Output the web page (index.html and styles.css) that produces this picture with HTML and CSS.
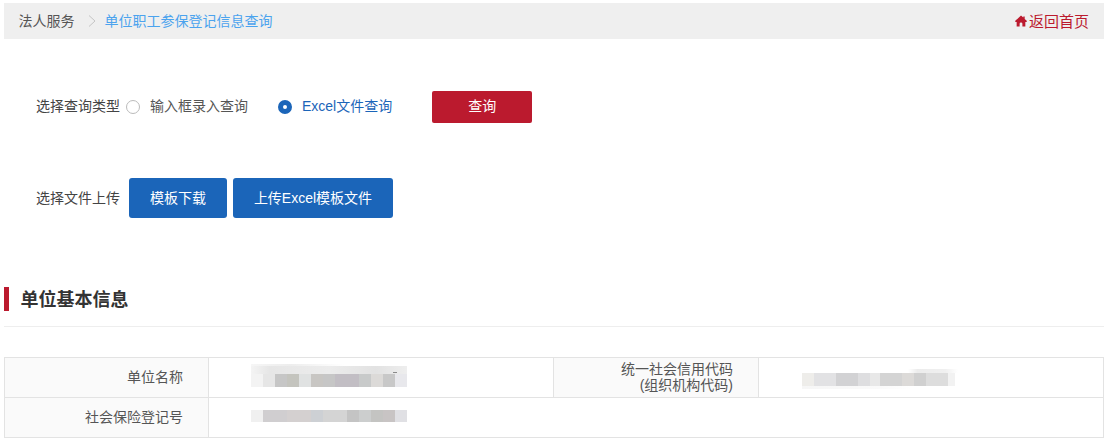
FILE: index.html
```html
<!DOCTYPE html>
<html lang="zh-CN">
<head>
  <meta charset="UTF-8">
  <meta name="viewport" content="width=device-width, initial-scale=1.0">
  <title>单位职工参保登记信息查询</title>
  <link rel="stylesheet" href="styles.css">
</head>
<body>
  <div class="crumb-bar">
    <div class="crumbs">
      <span class="crumb">法人服务</span>
      <svg class="crumb-arrow" width="8" height="12" viewBox="0 0 8 12"><path d="M1 0.500l6 5.500-6 5.500" fill="none" stroke="#c4c4c4" stroke-width="1"/></svg>
      <span class="crumb-current">单位职工参保登记信息查询</span>
    </div>
    <a class="home-link" href="#">
      <svg class="home-icon" width="12" height="12" viewBox="0 0 13 12"><path d="M6.500 0L0.300 5.800v1.200h1.500v5h3.200V9a1.500 1.500 0 0 1 3 0v3h3.200V7h1.500V5.800L10.500 3.700V1H9v1.300z" fill="#bb1a2e"/></svg>返回首页
    </a>
  </div>

  <div class="query-row">
    <span class="field-label">选择查询类型</span>
    <label class="radio radio-first"><span class="radio-dot"></span><span class="radio-text">输入框录入查询</span></label>
    <label class="radio radio-on"><span class="radio-dot"></span><span class="radio-text">Excel文件查询</span></label>
    <button class="btn-red">查询</button>
  </div>

  <div class="upload-row">
    <span class="field-label">选择文件上传</span>
    <button class="btn-blue btn-template">模板下载</button>
    <button class="btn-blue btn-upload">上传Excel模板文件</button>
  </div>

  <div class="section-head">
    <h2 class="section-title">单位基本信息</h2>
  </div>

  <table class="info-table">
    <colgroup>
      <col class="col-a"><col class="col-b"><col class="col-c"><col>
    </colgroup>
    <tr>
      <th>单位名称</th>
      <td><div class="blur blur-name"></div></td>
      <th class="two-line">统一社会信用代码<br>(组织机构代码)</th>
      <td><div class="blur blur-code"></div></td>
    </tr>
    <tr>
      <th>社会保险登记号</th>
      <td colspan="3"><div class="blur blur-reg"></div></td>
    </tr>
  </table>
</body>
</html>
```

FILE: styles.css
```css
body {
    font-family: "Liberation Sans", "Noto Sans CJK SC", sans-serif;
    font-size: 14px;
    color: #444;
    background-color: #fff;
    margin: 0;
    padding: 3px 0 0 4px;
}

.crumb-bar {
    display: flex;
    justify-content: space-between;
    align-items: center;
    height: 36px;
    padding: 0 15px 0 14.500px;
    background-color: #efefef;
}

.crumbs {
    display: flex;
    align-items: center;
}

.crumb {
    margin-bottom: 2px;
    color: #555;
}

.crumb-arrow {
    margin: 0 9px 0 13px;
}

.crumb-current {
    margin-bottom: 2px;
    color: #4ba3ee;
}

.home-link {
    display: flex;
    align-items: center;
    padding-bottom: 2px;
    font-size: 15px;
    color: #bb1a2e;
    text-decoration: none;
}

.home-icon {
    margin: 1px 2px 0 0;
}

.query-row {
    display: flex;
    align-items: center;
    height: 32px;
    margin-top: 52px;
    padding-left: 32px;
}

.upload-row {
    display: flex;
    align-items: center;
    height: 40px;
    margin-top: 55px;
    padding-left: 32px;
}

.field-label {
    margin-bottom: 5px;
    color: #444;
}

.upload-row .field-label {
    margin-bottom: 2px;
}

.radio {
    display: flex;
    align-items: center;
    color: #555;
}

.radio-text {
    margin-bottom: 5px;
}

.radio-first {
    margin-left: 6px;
}

.radio-on {
    margin-left: 30px;
    color: #1b65b9;
}

.radio-dot {
    width: 14px;
    height: 14px;
    box-sizing: border-box;
    margin-right: 10px;
    border: 1px solid #bbb;
    border-radius: 50%;
    background-color: #fff;
}

.radio-on .radio-dot {
    border: 5px solid #1b65b9;
}

button {
    font-family: inherit;
    font-size: 14px;
    color: #fff;
    border: none;
    border-radius: 2px;
    cursor: pointer;
}

.btn-red {
    width: 100px;
    height: 32px;
    margin-left: 40px;
    padding-bottom: 5px;
    background-color: #bb1a2e;
}

.btn-blue {
    height: 40px;
    padding-bottom: 3px;
    background-color: #1b65b9;
    border-radius: 3px;
}

.btn-template {
    width: 98px;
    margin-left: 9px;
}

.btn-upload {
    width: 160px;
    margin-left: 6px;
}

.section-head {
    margin-top: 69px;
    padding-bottom: 15px;
    border-bottom: 1px solid #eee;
}

.section-title {
    height: 24px;
    margin: 0;
    padding-left: 11.500px;
    border-left: 5px solid #bb1a2e;
    font-size: 18px;
    line-height: 26px;
    font-weight: bold;
    color: #333;
}

.info-table {
    width: 1100px;
    margin-top: 30px;
    border-collapse: collapse;
    table-layout: fixed;
}

.col-a {
    width: 204px;
}

.col-b {
    width: 345px;
}

.col-c {
    width: 205px;
}

.info-table tr {
    height: 40px;
}

.info-table th,
.info-table td {
    padding: 0;
    border: 1px solid #e3e3e3;
}

.info-table th {
    padding: 0 25px 3px 0;
    font-weight: normal;
    text-align: right;
    color: #555;
    background-color: #fafafa;
}

.info-table th.two-line {
    padding-bottom: 2px;
    line-height: 16px;
}

.blur {
    filter: blur(0.6px);
}

.blur-name {
    width: 156px;
    height: 24px;
    margin: 0 0 4px 42px;
    background:
        linear-gradient(#8a8a8a, #8a8a8a) 142px 8px / 4px 1px no-repeat,
        linear-gradient(90deg, #f3f3f3 0 12px, #e6e6e6 12px 24px, #c6c6c6 24px 36px, #c4c4be 36px 48px, #e0e2e2 48px 60px, #c8c6c3 60px 72px, #c6c6c6 72px 84px, #c2bec4 84px 108px, #c8caca 108px 120px, #dcdad8 120px 132px, #c8c8c8 132px 144px, #e8e8ec 144px 156px) 0 10px / 100% 13px no-repeat,
        linear-gradient(90deg, #f4f4f4, #e6e6e6 12%, #ececec 50%, #e2e2e2 80%, #eeeeee) 0 2px / 100% 8px no-repeat,
        linear-gradient(90deg, #f6f6f6, #ededed 25%, #fff 60%) 0 0 / 100% 3px no-repeat;
}

.blur-code {
    width: 156px;
    height: 20px;
    margin: 3px 0 0 43px;
    background:
        linear-gradient(90deg, #eeedea 0 12px, #e2e2e4 12px 34px, #d2d2d4 34px 56px, #dedee0 56px 68px, #e8e8e8 68px 78px, #d4d4d4 78px 100px, #dcdad8 100px 112px, #d0d0d0 112px 124px, #dddddd 124px 146px, #f2f2f2 146px 153px, #fff 153px) 0 4px / 100% 13px no-repeat,
        linear-gradient(90deg, #fff 68%, #ececec 74%, #f0f0f0 92%, #fff) 0 0 / 100% 4px no-repeat,
        linear-gradient(90deg, #f6f6f6, #fafafa 50%, #fff 70%) 0 17px / 100% 3px no-repeat;
}

.blur-reg {
    width: 156px;
    height: 12px;
    margin: 0 0 3px 42px;
    background: linear-gradient(90deg, #f0f0f0 0 12px, #d0ced0 12px 36px, #d4d0d0 36px 60px, #cdd0d4 60px 72px, #d4d4d4 72px 96px, #c4c4c4 96px 108px, #cccece 108px 120px, #c4c4c2 120px 132px, #c8c4c4 132px 144px, #e0e0e4 144px 156px);
}
```
